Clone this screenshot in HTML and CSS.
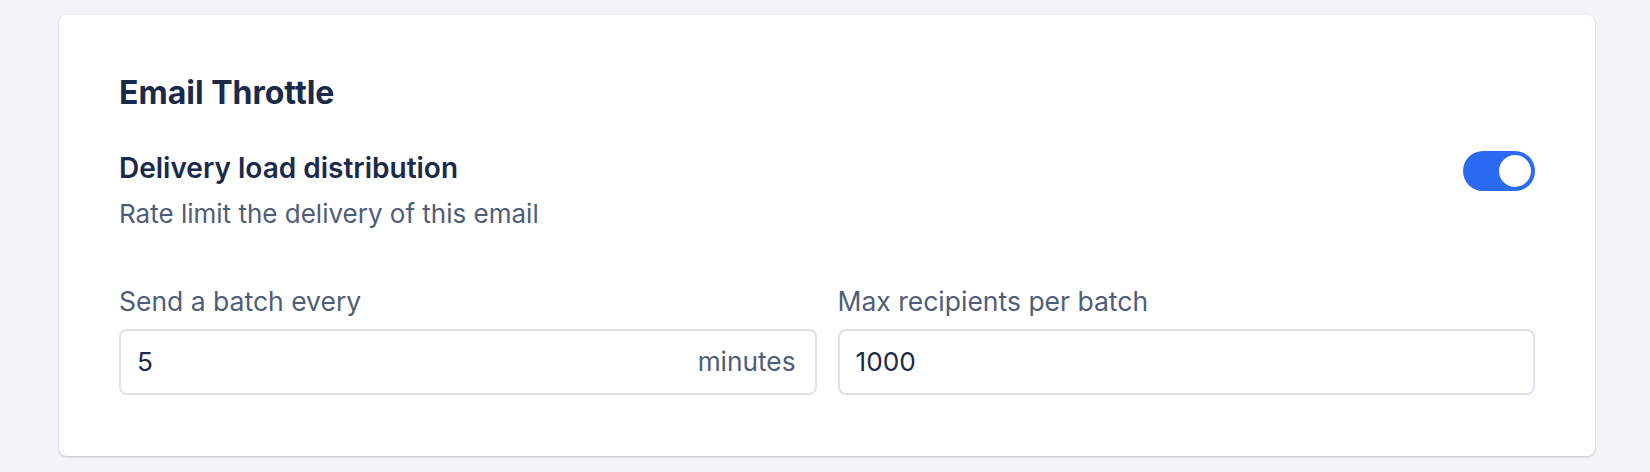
FILE: index.html
```html
<!DOCTYPE html>
<html lang="en">
<head>
<meta charset="utf-8">
<title>Email Throttle</title>
<link rel="stylesheet" href="styles.css">
</head>
<body>
<main class="page">
  <section class="card">
    <h2 class="card-title">Email Throttle</h2>
    <div class="setting-row">
      <div class="setting-text">
        <div class="setting-name">Delivery load distribution</div>
        <div class="setting-desc">Rate limit the delivery of this email</div>
      </div>
      <button class="toggle is-on" type="button" aria-pressed="true"><span class="toggle-knob"></span></button>
    </div>
    <div class="fields">
      <div class="field">
        <label class="field-label">Send a batch every</label>
        <div class="input">
          <span class="input-value">5</span>
          <span class="input-suffix">minutes</span>
        </div>
      </div>
      <div class="field">
        <label class="field-label">Max recipients per batch</label>
        <div class="input">
          <span class="input-value">1000</span>
        </div>
      </div>
    </div>
  </section>
</main>
</body>
</html>
```
FILE: styles.css
```css
* { box-sizing: border-box; }

html, body {
  margin: 0;
  background: #f3f4f6;
}

body {
  font-family: Inter, "Noto Sans", "Liberation Sans", sans-serif;
  color: #1b2a4a;
}

.page {
  padding: 15px 55px 16px 59px;
}

.card {
  background: #ffffff;
  border-radius: 8px;
  box-shadow: 0 1px 3px rgba(15, 23, 42, 0.10), 0 1px 2px rgba(15, 23, 42, 0.12);
  padding: 58px 60px 61px 60px;
  display: flex;
  flex-direction: column;
}

.card-title {
  margin: 0;
  font-size: 32px;
  line-height: 40px;
  font-weight: 700;
  color: #1b2a4a;
}

.setting-row {
  margin-top: 37px;
  display: flex;
  justify-content: space-between;
  align-items: flex-start;
}

.setting-text {
  display: flex;
  flex-direction: column;
  gap: 11px;
}

.setting-name {
  font-size: 28px;
  line-height: 36px;
  font-weight: 600;
  color: #1b2a4a;
}

.setting-desc {
  font-size: 26px;
  line-height: 34px;
  color: #4f5d78;
}

.toggle {
  margin-top: 1px;
  width: 72px;
  height: 40px;
  border: none;
  border-radius: 20px;
  background: #2b6bf3;
  padding: 4px;
  display: flex;
  justify-content: flex-end;
  align-items: center;
}

.toggle-knob {
  width: 32px;
  height: 32px;
  border-radius: 50%;
  background: #ffffff;
}

.fields {
  margin-top: 53px;
  display: grid;
  grid-template-columns: 1fr 1fr;
  column-gap: 21px;
}

.field {
  display: flex;
  flex-direction: column;
  gap: 11px;
}

.field-label {
  font-size: 26.5px;
  line-height: 34px;
  color: #4f5d78;
}

.input {
  height: 66px;
  border: 2px solid #dde2ea;
  border-radius: 8px;
  padding: 0 19px 0 16px;
  display: flex;
  align-items: center;
  justify-content: space-between;
  font-size: 26.25px;
  line-height: 34px;
}

.input-value {
  color: #1b2a4a;
}

.input-suffix {
  color: #4f5d78;
}
```
